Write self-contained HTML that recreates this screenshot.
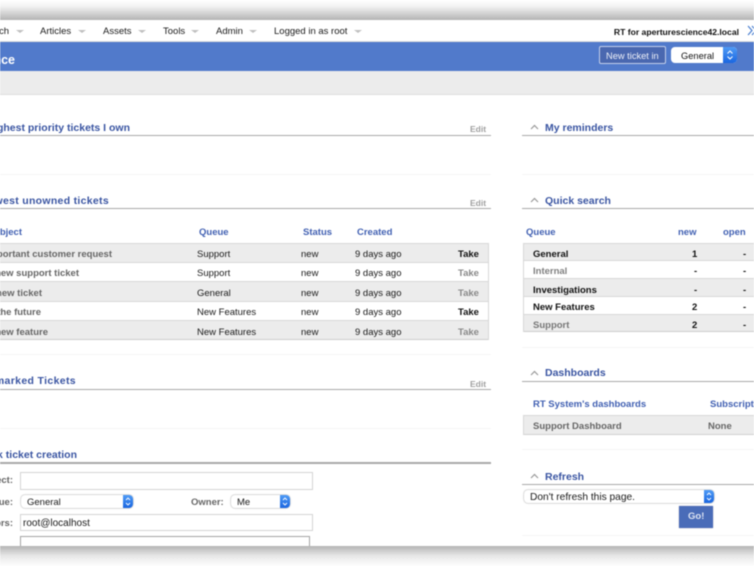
<!DOCTYPE html>
<html><head><meta charset="utf-8"><title>RT at a glance</title>
<style>
html,body{margin:0;padding:0;background:#fff}
#w{position:relative;width:754px;height:566px;overflow:hidden;background:#fff;font-family:"Liberation Sans",sans-serif;font-size:9.500px;color:#1a1a1a}
#c{position:absolute;left:0;top:0;width:754px;height:566px;filter:blur(.4px)}
#c div{position:absolute}
.t,.h,.th,.g,.b,.lab{transform:translateY(1px)}
.t{white-space:nowrap;line-height:12px;height:12px}
.h{font-weight:bold;font-size:10.500px;color:#3a55a2;white-space:nowrap;line-height:12px;height:12px}
.th{font-weight:bold;font-size:9.500px;color:#4160b2;white-space:nowrap;line-height:12px;height:12px}
.g{font-weight:bold;color:#666;white-space:nowrap;line-height:12px;height:12px;font-size:9.500px}
.b{font-weight:bold;color:#111;white-space:nowrap;line-height:12px;height:12px;font-size:9.500px}
.l{background:#a9a9a9;height:1.500px}
.row{background:#ececec;border-top:1px solid #d8d8d8;box-sizing:border-box}
.wr{background:#fff;border-top:1px solid #d8d8d8;box-sizing:border-box}
.foot{background:#f6f6f6;height:1px}
.inp{background:#fff;border:1px solid #d5d5d5;box-sizing:border-box}
.sel{background:#fff;border-radius:4px;box-shadow:0 0 1.500px #777;box-sizing:border-box}
.st{right:0;top:0;bottom:0;width:10px;background:linear-gradient(#4f9bf6,#1a66e0);border-radius:0 4px 4px 0}
.tri{width:0;height:0;border-left:4px solid transparent;border-right:4px solid transparent;border-top:3px solid #c0c0c0}
.lab{font-weight:bold;color:#666;font-size:9.500px;white-space:nowrap;line-height:12px;height:12px}
svg{position:absolute}
</style></head><body><div id="w"><div id="c">
<div style="left:0;top:0;width:754px;height:20px;background:linear-gradient(#fff 0,#f4f4f4 30%,#b4b4b4 100%)"></div>
<div style="left:0;top:546px;width:754px;height:20px;background:linear-gradient(#b4b4b4 0,#e8e8e8 50%,#fdfdfd 100%)"></div>

<div style="left:0;top:41px;width:754px;height:1px;background:#ddd"></div>
<div class="t" style="right:745px;top:25px">Search</div><div class="tri" style="left:16px;top:30px"></div>
<div class="t" style="left:40px;top:25px">Articles</div><div class="tri" style="left:78px;top:30px"></div>
<div class="t" style="left:103px;top:25px">Assets</div><div class="tri" style="left:138px;top:30px"></div>
<div class="t" style="left:163px;top:25px">Tools</div><div class="tri" style="left:191px;top:30px"></div>
<div class="t" style="left:216px;top:25px">Admin</div><div class="tri" style="left:249px;top:30px"></div>
<div class="t" style="left:274px;top:25px">Logged in as root</div><div class="tri" style="left:354px;top:30px"></div>
<div class="t" style="right:15px;top:25px;font-weight:bold;font-size:8.600px;color:#111">RT for aperturescience42.local</div>
<svg style="left:747px;top:25px" width="7" height="11" viewBox="0 0 7 11"><path d="M1 1l4 4.500-4 4.500M5 1l4 4.500-4 4.500" fill="none" stroke="#4a7fd0" stroke-width="1.200"/></svg>

<div style="left:0;top:42px;width:754px;height:29px;background:#517acb"></div>
<div class="t" style="right:739px;top:52px;color:#fff;font-weight:bold;font-size:12.500px;line-height:14px;height:14px">RT at a glance</div>
<div style="left:599px;top:46px;width:67px;height:18px;box-sizing:border-box;border:1px solid #c4d0ea;border-radius:2px;background:#4a68b0"></div>
<div class="t" style="left:606px;top:49px;color:#eef1f9;font-size:9.300px">New ticket in</div>
<div class="sel" style="left:671px;top:47px;width:66px;height:16px;box-shadow:none"><div class="st" style="width:14px"></div></div>
<div class="t" style="left:681px;top:49px;color:#111;font-size:9.300px">General</div>
<svg style="left:726px;top:49px" width="8" height="12" viewBox="0 0 8 12"><path d="M1.500 4.500L4 2l2.500 2.500M1.500 7.500L4 10l2.500-2.500" fill="none" stroke="#fff" stroke-width="1"/></svg>

<div style="left:0;top:71px;width:754px;height:23px;background:#ececec"></div>
<div style="left:0;top:94px;width:754px;height:1px;background:#ddd"></div>

<!-- left column -->
<div class="h" style="right:624px;top:121px">Highest priority tickets I own</div>
<div class="l" style="left:0;top:134.500px;width:491px"></div>
<div class="t" style="left:470px;top:122px;color:#a0a0a0;font-weight:bold;font-size:8.500px">Edit</div>
<div class="foot" style="left:0;top:174px;width:491px"></div>

<div class="h" style="right:645px;top:194px;letter-spacing:.3px">10 newest unowned tickets</div>
<div class="l" style="left:0;top:207.500px;width:491px"></div>
<div class="t" style="left:470px;top:196px;color:#a0a0a0;font-weight:bold;font-size:8.500px">Edit</div>
<div class="th" style="right:732px;top:226px">Subject</div>
<div class="th" style="left:199px;top:226px">Queue</div>
<div class="th" style="left:303px;top:226px">Status</div>
<div class="th" style="left:357px;top:226px">Created</div>

<div class="row" style="left:0;top:243px;width:489px;height:20px"></div>
<div class="wr" style="left:0;top:262px;width:489px;height:20px"></div>
<div class="row" style="left:0;top:281px;width:489px;height:21px"></div>
<div class="wr" style="left:0;top:301px;width:489px;height:20px"></div>
<div class="row" style="left:0;top:320px;width:489px;height:20px;border-bottom:1px solid #ccc"></div>
<div style="left:488px;top:243px;width:1px;height:97px;background:#d8d8d8"></div>

<div class="g" style="right:642px;top:248px">Important customer request</div>
<div class="g" style="right:675px;top:267px">A new support ticket</div>
<div class="g" style="right:712px;top:287px">A new ticket</div>
<div class="g" style="right:713px;top:306px">In the future</div>
<div class="g" style="right:706px;top:326px">A new feature</div>

<div class="t" style="left:197px;top:248px">Support</div>
<div class="t" style="left:197px;top:267px">Support</div>
<div class="t" style="left:197px;top:287px">General</div>
<div class="t" style="left:197px;top:306px">New Features</div>
<div class="t" style="left:197px;top:326px">New Features</div>
<div class="t" style="left:301px;top:248px">new</div>
<div class="t" style="left:301px;top:267px">new</div>
<div class="t" style="left:301px;top:287px">new</div>
<div class="t" style="left:301px;top:306px">new</div>
<div class="t" style="left:301px;top:326px">new</div>
<div class="t" style="left:355px;top:248px">9 days ago</div>
<div class="t" style="left:355px;top:267px">9 days ago</div>
<div class="t" style="left:355px;top:287px">9 days ago</div>
<div class="t" style="left:355px;top:306px">9 days ago</div>
<div class="t" style="left:355px;top:326px">9 days ago</div>
<div class="b" style="left:458px;top:248px">Take</div>
<div class="g" style="left:458px;top:267px;color:#888">Take</div>
<div class="g" style="left:458px;top:287px;color:#888">Take</div>
<div class="b" style="left:458px;top:306px">Take</div>
<div class="g" style="left:458px;top:326px;color:#888">Take</div>
<div class="foot" style="left:0;top:354px;width:491px"></div>

<div class="h" style="right:678px;top:374px;letter-spacing:.35px">Bookmarked Tickets</div>
<div class="l" style="left:0;top:388.500px;width:491px"></div>
<div class="t" style="left:470px;top:377px;color:#a0a0a0;font-weight:bold;font-size:8.500px">Edit</div>
<div class="foot" style="left:0;top:428px;width:491px"></div>

<div class="h" style="right:677px;top:448px">Quick ticket creation</div>
<div class="l" style="left:0;top:462px;width:491px"></div>

<div class="lab" style="right:741px;top:474px">Subject:</div>
<div class="inp" style="left:20px;top:472px;width:293px;height:18px"></div>
<div class="lab" style="right:741px;top:496px">Queue:</div>
<div class="sel" style="left:21px;top:495px;width:112px;height:13px"><div class="st"></div></div>
<svg style="left:124px;top:496px" width="8" height="11" viewBox="0 0 8 11"><path d="M2 4l2-2 2 2M2 7l2 2 2-2" fill="none" stroke="#fff" stroke-width=".9"/></svg>
<div class="t" style="left:27px;top:496px">General</div>
<div class="lab" style="left:191px;top:496px">Owner:</div>
<div class="sel" style="left:231px;top:495px;width:59px;height:13px"><div class="st"></div></div>
<svg style="left:281px;top:496px" width="8" height="11" viewBox="0 0 8 11"><path d="M2 4l2-2 2 2M2 7l2 2 2-2" fill="none" stroke="#fff" stroke-width=".9"/></svg>
<div class="t" style="left:237px;top:496px">Me</div>
<div class="lab" style="right:741px;top:517px">Requestors:</div>
<div class="inp" style="left:20px;top:514px;width:293px;height:17px"></div>
<div class="t" style="left:23px;top:517px;font-size:10px">root@localhost</div>
<div style="left:20px;top:536px;width:290px;height:10px;box-sizing:border-box;border:1px solid #a5a5a5;border-bottom:0;background:#fff"></div>

<!-- right column -->
<svg style="left:530px;top:124px" width="9" height="6" viewBox="0 0 9 6"><path d="M1 5l3.500-3.500L8 5" fill="none" stroke="#999" stroke-width="1.200"/></svg>
<div class="h" style="left:545px;top:121px">My reminders</div>
<div class="l" style="left:522px;top:134.500px;width:232px"></div>
<div class="foot" style="left:522px;top:174px;width:232px"></div>

<svg style="left:530px;top:197px" width="9" height="6" viewBox="0 0 9 6"><path d="M1 5l3.500-3.500L8 5" fill="none" stroke="#999" stroke-width="1.200"/></svg>
<div class="h" style="left:545px;top:194px">Quick search</div>
<div class="l" style="left:522px;top:207.500px;width:232px"></div>
<div class="th" style="left:526px;top:226px">Queue</div>
<div class="th" style="left:678px;top:226px">new</div>
<div class="th" style="left:723px;top:226px">open</div>

<div class="row" style="left:523px;top:243px;width:231px;height:18px"></div>
<div class="wr" style="left:523px;top:260px;width:231px;height:19px"></div>
<div class="row" style="left:523px;top:278px;width:231px;height:19px"></div>
<div class="wr" style="left:523px;top:296px;width:231px;height:19px"></div>
<div class="row" style="left:523px;top:314px;width:231px;height:18px;border-bottom:1px solid #ccc"></div>
<div style="left:523px;top:243px;width:1px;height:89px;background:#d8d8d8"></div>

<div class="b" style="left:533px;top:248px">General</div>
<div class="g" style="left:533px;top:265px;color:#808080">Internal</div>
<div class="b" style="left:533px;top:284px">Investigations</div>
<div class="b" style="left:533px;top:301px">New Features</div>
<div class="g" style="left:533px;top:319px;color:#777">Support</div>
<div class="b" style="left:692px;top:248px">1</div>
<div class="b" style="left:694px;top:265px">-</div>
<div class="b" style="left:694px;top:284px">-</div>
<div class="b" style="left:692px;top:301px">2</div>
<div class="b" style="left:692px;top:319px">2</div>
<div class="b" style="left:743px;top:248px">-</div>
<div class="b" style="left:743px;top:265px">-</div>
<div class="b" style="left:743px;top:284px">-</div>
<div class="b" style="left:743px;top:301px">-</div>
<div class="b" style="left:743px;top:319px">-</div>
<div class="foot" style="left:522px;top:347px;width:232px"></div>

<svg style="left:530px;top:370px" width="9" height="6" viewBox="0 0 9 6"><path d="M1 5l3.500-3.500L8 5" fill="none" stroke="#999" stroke-width="1.200"/></svg>
<div class="h" style="left:545px;top:366px">Dashboards</div>
<div class="l" style="left:522px;top:380.500px;width:232px"></div>
<div class="th" style="left:533px;top:398px">RT System's dashboards</div>
<div class="th" style="left:710px;top:398px">Subscription</div>
<div class="row" style="left:523px;top:415px;width:231px;height:20px;border-bottom:1px solid #d0d0d0"></div>
<div style="left:523px;top:415px;width:1px;height:20px;background:#d8d8d8"></div>
<div class="g" style="left:533px;top:420px">Support Dashboard</div>
<div class="g" style="left:708px;top:420px">None</div>
<div class="foot" style="left:522px;top:449px;width:232px"></div>

<svg style="left:530px;top:473px" width="9" height="6" viewBox="0 0 9 6"><path d="M1 5l3.500-3.500L8 5" fill="none" stroke="#999" stroke-width="1.200"/></svg>
<div class="h" style="left:545px;top:470px">Refresh</div>
<div class="l" style="left:522px;top:483.500px;width:232px"></div>
<div class="sel" style="left:524px;top:490px;width:190px;height:13px"><div class="st"></div></div>
<svg style="left:705px;top:491px" width="8" height="11" viewBox="0 0 8 11"><path d="M2 4l2-2 2 2M2 7l2 2 2-2" fill="none" stroke="#fff" stroke-width=".9"/></svg>
<div class="t" style="left:530px;top:491px;font-size:10.200px">Don't refresh this page.</div>
<div style="left:679px;top:506px;width:34px;height:22px;background:#4a6cb8;box-shadow:0 0 1px #99a"></div>
<div class="t" style="left:688px;top:510px;color:#dfe5f3;font-weight:bold;font-size:9.500px">Go!</div>
<div class="foot" style="left:522px;top:535px;width:232px"></div>
</div></div></body></html>
